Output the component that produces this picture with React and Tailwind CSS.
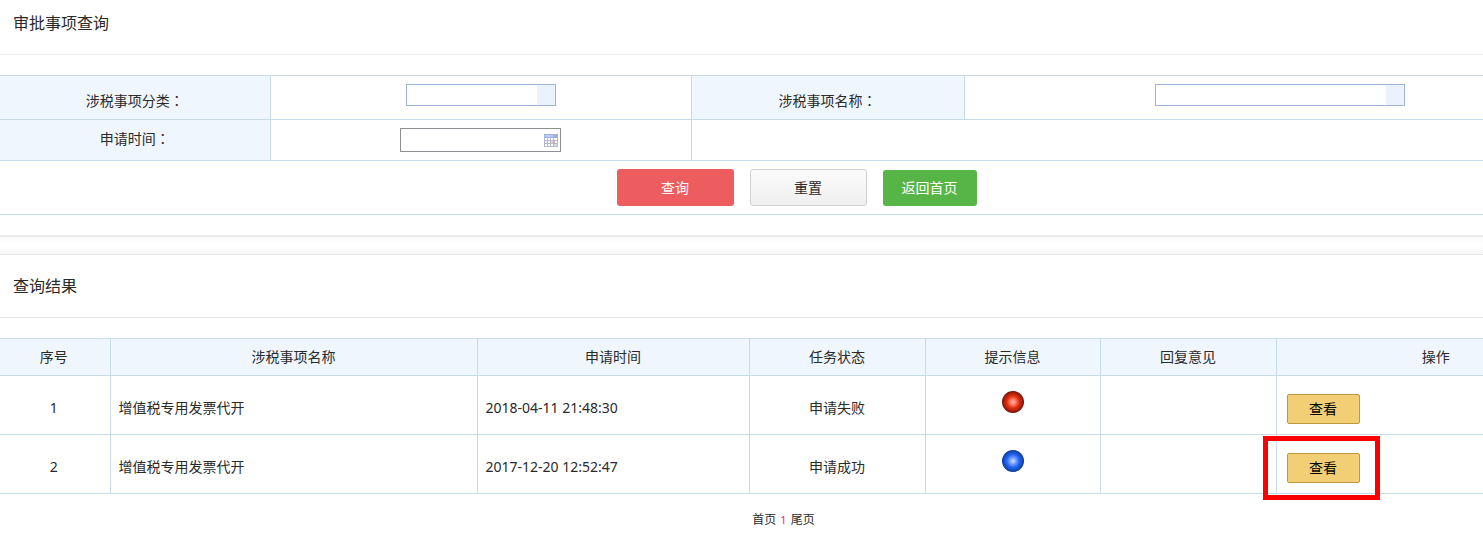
import React, { useState } from 'react';

const records = [
  { id: 1, name: '增值税专用发票代开', time: '2018-04-11 21:48:30', status: '申请失败', ok: false },
  { id: 2, name: '增值税专用发票代开', time: '2017-12-20 12:52:47', status: '申请成功', ok: true },
];

function CalendarIcon() {
  return (
    <svg width="14" height="13" viewBox="0 0 14 13" shapeRendering="crispEdges">
      <rect width="14" height="13" fill="#b6b8cc" />
      <rect width="14" height="4" fill="#9fb0e4" />
      <rect x="1" y="1" width="8" height="2" fill="#bccbf3" />
      <g fill="#ffffff">
        <path d="M1 4h2v2H1zM4 4h2v2H4zM7 4h2v2H7zM10 4h3v2h-3z" />
        <path d="M1 7h2v2H1zM4 7h2v2H4zM10 7h3v2h-3z" />
        <path d="M1 10h2v2H1zM4 10h2v2H4zM7 10h2v2H7z" />
      </g>
      <rect x="7" y="7" width="2" height="2" fill="#edcfd2" />
      <rect x="10" y="7" width="1" height="2" fill="#dba9ad" />
      <rect x="10" y="10" width="3" height="2" fill="#dcdcea" />
    </svg>
  );
}

// Glossy status ball, blue when the request went through
function StatusBall({ ok }) {
  const id = ok ? 'ball-ok' : 'ball-fail';
  const colors = ok
    ? ['#cfdcff', '#7ba3ff', '#2b69f5', '#1450cc', '#0b3a8c']
    : ['#ffb9a8', '#fb7560', '#e0300f', '#b01f0b', '#6e130b'];

  return (
    <svg
      className="inline-block align-middle"
      width="22"
      height="22"
      viewBox="0 0 22 22"
      role="img"
      aria-label={ok ? '成功' : '失败'}
    >
      <defs>
        <radialGradient id={id}>
          <stop offset="0" stopColor={colors[0]} />
          <stop offset="0.28" stopColor={colors[1]} />
          <stop offset="0.55" stopColor={colors[2]} />
          <stop offset="0.8" stopColor={colors[3]} />
          <stop offset="1" stopColor={colors[4]} />
        </radialGradient>
      </defs>
      <circle cx="11" cy="11" r="11" fill={`url(#${id})`} />
    </svg>
  );
}

function FieldLabel({ htmlFor, children }) {
  return (
    <label htmlFor={htmlFor}>
      {children}
      <span className="font-['Noto_Sans_CJK_TC',sans-serif]">：</span>
    </label>
  );
}

function SearchForm() {
  const [date, setDate] = useState('');

  return (
    <form onSubmit={(e) => e.preventDefault()} onReset={() => setDate('')}>
      <table className="w-full table-fixed border-collapse border-y border-[#c8dce8]">
        <colgroup>
          <col className="w-[270px]" />
          <col className="w-[421px]" />
          <col className="w-[273px]" />
          <col />
        </colgroup>
        <tbody>
          <tr className="h-11 border-b border-[#c8dce8]">
            <th className="bg-[#eff6fe] pt-1.5 font-normal">
              <FieldLabel htmlFor="category">涉税事项分类</FieldLabel>
            </th>
            <td className="border-x border-[#c8dce8] pt-2 text-center align-top">
              <select
                id="category"
                className="block mx-auto h-[22px] w-[150px] appearance-none border border-[#9fb6dc] bg-[linear-gradient(to_left,#eaf2fd_18px,#fff_18px)]"
              />
            </td>
            <th className="border-r border-[#c8dce8] bg-[#eff6fe] pt-1.5 font-normal">
              <FieldLabel htmlFor="item">涉税事项名称</FieldLabel>
            </th>
            <td className="pt-2 align-top">
              <select
                id="item"
                className="block mx-auto h-[22px] w-[250px] appearance-none border border-[#9fb6dc] bg-[linear-gradient(to_left,#eaf2fd_18px,#fff_18px)]"
              />
            </td>
          </tr>
          <tr className="h-[41px] border-b border-[#c8dce8]">
            <th className="bg-[#eff6fe] pb-1 font-normal">
              <FieldLabel htmlFor="apply-date">申请时间</FieldLabel>
            </th>
            <td className="border-x border-[#c8dce8]">
              <div className="relative mx-auto w-[161px]">
                <input
                  id="apply-date"
                  type="text"
                  value={date}
                  onChange={(e) => setDate(e.target.value)}
                  className="block h-6 w-full border border-[#8e8e94] bg-white pl-1 pr-5"
                />
                <span className="pointer-events-none absolute right-[3px] top-[6px]">
                  <CalendarIcon />
                </span>
              </div>
            </td>
            <td colSpan={2} />
          </tr>
          <tr className="h-[54px]">
            <td colSpan={4}>
              <div className="flex items-end justify-center gap-4 pr-[2px]">
                <button type="submit" className="h-[37px] w-[117px] rounded-[3px] bg-[#ed5c5e] text-white">
                  查询
                </button>
                <button
                  type="reset"
                  className="h-[37px] w-[117px] rounded-[3px] border border-[#d2d2d2] bg-linear-to-b from-[#fbfbfb] to-[#efefef]"
                >
                  重置
                </button>
                <button type="button" className="h-9 w-[94px] rounded-[3px] bg-[#57b548] text-white">
                  返回首页
                </button>
              </div>
            </td>
          </tr>
        </tbody>
      </table>
    </form>
  );
}

function ResultTable() {
  return (
    <table className="w-full table-fixed border-collapse border-y border-[#c8dce8]">
      <thead>
        <tr className="h-[37px] border-b border-[#c8dce8] bg-[#eff6fe] *:font-normal">
          <th className="w-[110px] pr-[2px]">序号</th>
          <th className="w-[367px] border-x border-[#c8dce8]">涉税事项名称</th>
          <th className="w-[272px] border-r border-[#c8dce8]">申请时间</th>
          <th className="w-[176px] border-r border-[#c8dce8]">任务状态</th>
          <th className="w-[175px] border-r border-[#c8dce8]">提示信息</th>
          <th className="w-[176px] border-r border-[#c8dce8]">回复意见</th>
          <th>操作</th>
        </tr>
      </thead>
      <tbody>
        {records.map((row) => (
          <tr key={row.id} className="h-[59px] border-b border-[#c8dce8]">
            <td className="pr-[2px] pt-1.5 text-center">{row.id}</td>
            <td className="border-x border-[#c8dce8] pl-2 pt-1.5">{row.name}</td>
            <td className="border-r border-[#c8dce8] pl-2 pt-1.5">{row.time}</td>
            <td className="border-r border-[#c8dce8] pt-1.5 text-center">{row.status}</td>
            <td className="border-r border-[#c8dce8] pb-1.5 text-center">
              <StatusBall ok={row.ok} />
            </td>
            <td className="border-r border-[#c8dce8]" />
            <td className="pl-[10px] pt-2">
              <div className="relative w-[73px]">
                <button
                  type="button"
                  className="block h-[30px] w-full rounded-[2px] border border-[#bd9840] bg-[#f2cf75] text-black"
                >
                  查看
                </button>
                {row.ok && (
                  <span className="pointer-events-none absolute -bottom-[17px] -left-6 -right-5 -top-[17px] border-[5px] border-[#fb0000]" />
                )}
              </div>
            </td>
          </tr>
        ))}
      </tbody>
    </table>
  );
}

function App() {
  return (
    <div className="overflow-hidden bg-white font-['Noto_Sans','Noto_Sans_CJK_SC',sans-serif] text-sm text-[#2a2a2a]">
      {/* Both panels run past the right edge of the window */}
      <div className="-mr-28">
        <section className="border-b-2 border-[#ececec] pb-5">
          <h2 className="mb-5 flex h-[55px] items-center border-b border-[#e8ecee] pb-2 pl-[13px] text-base">
            审批事项查询
          </h2>
          <SearchForm />
        </section>

        <div className="h-[17px] bg-linear-to-b from-[#fafafa] via-white to-[#f6f6f6]" />

        <section className="border-t border-[#e6e6e6]">
          <h2 className="mb-5 flex h-[63px] items-center border-b border-[#e4e8ea] pl-[13px] text-base">
            查询结果
          </h2>
          <ResultTable />
        </section>

        <nav className="mt-[18px] flex items-center justify-center gap-1 pb-4 pr-7 text-xs">
          <a href="#first">首页</a>
          <span className="text-[11px] text-[#d8325a]">1</span>
          <a href="#last">尾页</a>
        </nav>
      </div>
    </div>
  );
}

export default App;
